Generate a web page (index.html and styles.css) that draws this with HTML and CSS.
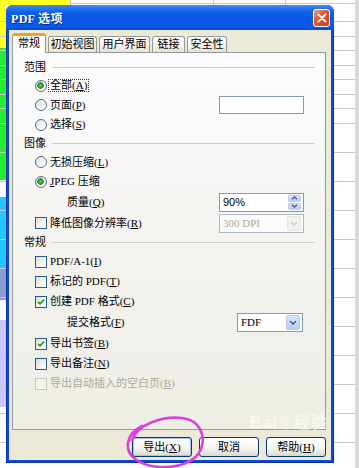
FILE: index.html
```html
<!DOCTYPE html>
<html lang="zh-CN">
<head>
<meta charset="utf-8">
<title>PDF 选项</title>
<link rel="stylesheet" href="styles.css">
</head>
<body>
<div class="dialog">
  <div class="titlebar">
    <span class="title">PDF 选项</span>
    <span class="close"><svg width="10" height="10" viewBox="0 0 10 10"><path d="M1.5 1.5 L8.5 8.5 M8.5 1.5 L1.5 8.5" stroke="#fff" stroke-width="2" stroke-linecap="round"/></svg></span>
  </div>
  <div class="client">
    <div class="tabs">
      <div class="tab active t-general">常规</div>
      <div class="tab t-view">初始视图</div>
      <div class="tab t-ui">用户界面</div>
      <div class="tab t-link">链接</div>
      <div class="tab t-sec">安全性</div>
    </div>
    <div class="panel">
      <div class="head">范围</div>
      <div class="opt"><span class="ctl radio on"></span><span class="lbl focus">全部(<u>A</u>)</span></div>
      <div class="opt"><span class="ctl radio"></span><span class="lbl">页面(<u>P</u>)</span><span class="widget textbox"></span></div>
      <div class="opt"><span class="ctl radio"></span><span class="lbl">选择(<u>S</u>)</span></div>

      <div class="head">图像</div>
      <div class="opt"><span class="ctl radio"></span><span class="lbl">无损压缩(<u>L</u>)</span></div>
      <div class="opt"><span class="ctl radio on"></span><span class="lbl"><u>J</u>PEG 压缩</span></div>
      <div class="opt tall indent"><span class="lbl">质量(<u>Q</u>)</span>
        <span class="widget combo">
          <span class="val sans">90%</span>
          <span class="spinbtns">
            <span class="spb"><svg width="7" height="4" viewBox="0 0 7 4"><path d="M1 3.3 L3.5 1 L6 3.3" stroke="#4d6185" stroke-width="1.4" fill="none"/></svg></span>
            <span class="spb"><svg width="7" height="4" viewBox="0 0 7 4"><path d="M1 0.7 L3.5 3 L6 0.7" stroke="#4d6185" stroke-width="1.4" fill="none"/></svg></span>
          </span>
        </span>
      </div>
      <div class="opt tall"><span class="ctl check"></span><span class="lbl">降低图像分辨率(<u>R</u>)</span>
        <span class="widget combo disabled">
          <span class="val">300 DPI</span>
          <span class="dd"><svg width="8" height="5" viewBox="0 0 8 5"><path d="M1 1 L4 4 L7 1" stroke="#c9ccd6" stroke-width="1.5" fill="none"/></svg></span>
        </span>
      </div>

      <div class="sec-general">
        <div class="head">常规</div>
        <div class="opt"><span class="ctl check"></span><span class="lbl">PDF/A-1(<u>I</u>)</span></div>
        <div class="opt"><span class="ctl check"></span><span class="lbl">标记的 PDF(<u>T</u>)</span></div>
        <div class="opt"><span class="ctl check"><svg width="8" height="8" viewBox="0 0 8 8"><path d="M1 3.8 L3 5.8 L7 1.6" stroke="#21a121" stroke-width="1.8" fill="none"/></svg></span><span class="lbl">创建 PDF 格式(<u>C</u>)</span></div>
        <div class="opt tall indent"><span class="lbl">提交格式(<u>F</u>)</span>
          <span class="widget combo fdf">
            <span class="val">FDF</span>
            <span class="dd"><svg width="8" height="5" viewBox="0 0 8 5"><path d="M1 1 L4 4 L7 1" stroke="#4d6185" stroke-width="1.6" fill="none"/></svg></span>
          </span>
        </div>
        <div class="opt"><span class="ctl check"><svg width="8" height="8" viewBox="0 0 8 8"><path d="M1 3.8 L3 5.8 L7 1.6" stroke="#21a121" stroke-width="1.8" fill="none"/></svg></span><span class="lbl">导出书签(<u>B</u>)</span></div>
        <div class="opt"><span class="ctl check"></span><span class="lbl">导出备注(<u>N</u>)</span></div>
        <div class="opt dis"><span class="ctl check"></span><span class="lbl">导出自动插入的空白页(<u>B</u>)</span></div>
      </div>
    </div>
    <div class="buttons">
      <button class="btn default">导出(<u>X</u>)</button>
      <button class="btn">取消</button>
      <button class="btn">帮助(<u>H</u>)</button>
    </div>
  </div>
</div>
<div class="watermark">Bai<span class="paw">❀</span>经验</div>
<svg class="mark" width="92" height="58" viewBox="0 0 92 58"><path d="M12 30 C18 14 42 6 62 8 C80 10 86 26 81 39 C76 52 58 58 40 57 C20 56 6 46 8 33 C9 26 14 20 22 16" stroke="#dc3fdc" stroke-width="2.6" fill="none" stroke-linecap="round"/></svg>
</body>
</html>
```
FILE: styles.css
```css
* { box-sizing: border-box; }
html, body { margin: 0; padding: 0; }
body {
  width: 359px;
  height: 468px;
  overflow: hidden;
  position: relative;
  font-family: "Liberation Serif", "Noto Sans CJK SC", serif;
  font-size: 11px;
  color: #000;
  background:
    linear-gradient(#ffff22, #ffff22) 0 0 / 70px 5px no-repeat,
    linear-gradient(to right, transparent 355px, #dadada 355px) 0 0 / 100% 100% no-repeat,
    linear-gradient(to right, transparent 70px, #c6c6c6 70px, #c6c6c6 71px, transparent 71px, transparent 213px, #c6c6c6 213px, #c6c6c6 214px, transparent 214px, transparent 285px, #c6c6c6 285px, #c6c6c6 286px, transparent 286px) 0 0 / 100% 5px no-repeat,
    repeating-linear-gradient(to bottom, transparent 0, transparent 13.5px, #c8c8c8 13.5px, #c8c8c8 14.5px) 0 8px,
    linear-gradient(to bottom, #ffff22 0, #ffff22 48px, #22ee33 48px, #22ee33 180px, #fff 180px, #fff 197px, #22c8ff 197px, #22c8ff 267px, #8d9ccc 267px, #8d9ccc 300px, #fff 300px, #fff 320px, #c8c8ff 320px, #c8c8ff 407px, #fff 407px) 0 0 / 6px 100% no-repeat,
    #fff;
}

/* window */
.dialog {
  width: 328px;
  height: 458px;
  margin: 5px 0 0 6px;
  background: #0b4ad8;
  border-radius: 7px 7px 0 0;
  box-shadow: inset 0 0 0 1px #0a2fa8;
  display: flex;
  flex-direction: column;
}
.titlebar {
  height: 25px;
  flex: none;
  display: flex;
  align-items: center;
  padding: 0 4px 0 5px;
  border-radius: 7px 7px 0 0;
  background: linear-gradient(to bottom, #3c8cf6 0%, #2a78f0 12%, #0d5fe8 30%, #0857e4 60%, #0b5ae8 85%, #0848d0 100%);
}
.title {
  flex: 1;
  color: #fff;
  font-weight: bold;
  font-size: 12px;
  letter-spacing: 0.3px;
  text-shadow: 1px 1px 0 #0b2a8c;
}
.close {
  width: 17px;
  height: 18px;
  border: 1px solid #fff;
  border-radius: 3px;
  background: linear-gradient(135deg, #f09a7a 0%, #e0542e 45%, #c8401c 100%);
  display: flex;
  align-items: center;
  justify-content: center;
}

.client {
  flex: 1;
  margin: 0 3px 3px;
  background: #ece9d8;
  padding: 3px 5px 3px 3px;
  display: flex;
  flex-direction: column;
}

/* tabs */
.tabs {
  height: 19px;
  flex: none;
  display: flex;
  align-items: flex-end;
  gap: 2px;
}
.tab {
  height: 16px;
  border: 1px solid #919b9c;
  border-bottom: none;
  border-radius: 3px 3px 0 0;
  background: linear-gradient(#ffffff, #f3f2ec 60%, #e4e2d6);
  display: flex;
  align-items: center;
  justify-content: center;
  line-height: 1;
}
.tab.active {
  height: 20px;
  margin-bottom: -1px;
  position: relative;
  z-index: 1;
  background: #fcfcfe;
  border-top: 3px solid #f4a02c;
  padding-bottom: 2px;
}
.t-general { width: 34px; }
.t-view { width: 49px; }
.t-ui { width: 51px; }
.t-link { width: 33px; }
.t-sec { width: 40px; }

.panel {
  height: 378px;
  flex: none;
  border: 1px solid #919b9c;
  background: linear-gradient(#fcfcfe, #f1f0ea 70%, #eeede6);
  padding: 5px 10px 0 11px;
}

.head {
  height: 18px;
  display: flex;
  align-items: center;
  line-height: 1;
}
.head::after {
  content: "";
  flex: 1;
  height: 1px;
  margin-left: 6px;
  background: #cfcdbf;
}

.opt {
  height: 19.5px;
  display: flex;
  align-items: center;
  padding-left: 11px;
  line-height: 1;
}
.opt.tall { height: 21px; }
.sec-general .opt { height: 20px; }
.sec-general .opt.tall { height: 22px; }
.opt.indent { padding-left: 43px; }

.lbl { white-space: nowrap; }
.lbl.focus { outline: 1px dotted #333; outline-offset: 0; padding: 0 1px; margin-left: -1px; }
.opt.dis .lbl { color: #aca899; }

.ctl {
  width: 12px;
  height: 12px;
  flex: none;
  margin-right: 3px;
  display: flex;
  align-items: center;
  justify-content: center;
}
.radio {
  border-radius: 50%;
  border: 1px solid #4f6f92;
  background: linear-gradient(135deg, #dcdbd4, #ffffff 80%);
}
.radio.on {
  background:
    radial-gradient(circle at 45% 45%, #6fd26f 0, #2aa52a 2px, #1d8a1d 3px, transparent 3.4px),
    linear-gradient(135deg, #dcdbd4, #ffffff 80%);
}
.check {
  border: 1px solid #2c5a88;
  background: linear-gradient(135deg, #dcdbd4, #ffffff 85%);
}
.opt.dis .check {
  border-color: #cac8bb;
  background: #f6f5f0;
}

.widget { margin-left: auto; margin-right: 11px; }
.textbox {
  width: 85px;
  height: 18px;
  border: 1px solid #7f9db9;
  background: #fff;
}
.combo {
  width: 85px;
  height: 19px;
  border: 1px solid #7f9db9;
  background: #fff;
  display: flex;
  align-items: center;
  padding: 1px 2px 1px 3px;
}
.combo.fdf { width: 66px; margin-right: 12px; }
.combo .val { flex: 1; white-space: nowrap; }
.sans { font-family: "Liberation Sans", "Noto Sans CJK SC", sans-serif; }
.combo.disabled { border-color: #aab5c6; background: #fbfbf9; }
.combo.disabled .val { color: #aca899; }
.dd {
  width: 14px;
  height: 15px;
  border: 1px solid #b9c9f3;
  border-radius: 2px;
  background: linear-gradient(#dbe5fd, #b9cbf7);
  display: flex;
  align-items: center;
  justify-content: center;
}
.combo.disabled .dd {
  background: #f2f1ec;
  border-color: #e6e5de;
}
.spinbtns {
  width: 13px;
  height: 15px;
  display: flex;
  flex-direction: column;
  gap: 1px;
}
.spb {
  flex: 1;
  border: 1px solid #b9c9f3;
  border-radius: 2px;
  background: linear-gradient(#dbe5fd, #b9cbf7);
  display: flex;
  align-items: center;
  justify-content: center;
}

/* buttons */
.buttons {
  margin-top: 7px;
  height: 20px;
  flex: none;
  display: flex;
  justify-content: flex-end;
  gap: 7px;
}
.btn {
  width: 60px;
  height: 20px;
  padding: 0;
  border: 1px solid #003c74;
  border-radius: 3px;
  background: linear-gradient(#ffffff, #f4f3ee 60%, #dcd8cc);
  font-family: "Liberation Serif", "Noto Sans CJK SC", serif;
  font-size: 11px;
  color: #000;
  line-height: 1;
}
.btn.default { box-shadow: inset 0 0 0 1px #a9c3f0; }

/* overlays */
.watermark {
  position: absolute;
  left: 250px;
  top: 414px;
  font-family: "Liberation Sans", "Noto Sans CJK SC", sans-serif;
  font-size: 16px;
  line-height: 18px;
  font-weight: bold;
  color: rgba(255, 255, 255, 0.6);
  white-space: nowrap;
  letter-spacing: 1px;
}
.paw { font-size: 13px; margin: 0 1px; }
.mark {
  position: absolute;
  left: 120px;
  top: 410px;
}
```
